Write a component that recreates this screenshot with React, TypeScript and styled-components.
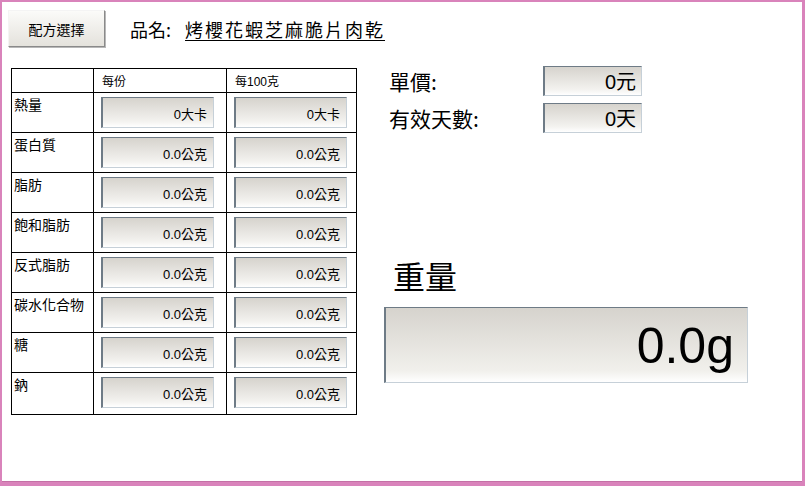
import styled, { createGlobalStyle } from 'styled-components';

type Nutrient = {
  name: string;
  perServing: string;
  per100: string;
};

const nutrients: Nutrient[] = [
  { name: '熱量', perServing: '0大卡', per100: '0大卡' },
  { name: '蛋白質', perServing: '0.0公克', per100: '0.0公克' },
  { name: '脂肪', perServing: '0.0公克', per100: '0.0公克' },
  { name: '飽和脂肪', perServing: '0.0公克', per100: '0.0公克' },
  { name: '反式脂肪', perServing: '0.0公克', per100: '0.0公克' },
  { name: '碳水化合物', perServing: '0.0公克', per100: '0.0公克' },
  { name: '糖', perServing: '0.0公克', per100: '0.0公克' },
  { name: '鈉', perServing: '0.0公克', per100: '0.0公克' },
];

const GlobalStyle = createGlobalStyle`
  html, body {
    margin: 0;
    padding: 0;
    background: #ffffff;
  }
  body {
    font-family: "Liberation Sans", "Noto Sans CJK TC", sans-serif;
    color: #000000;
  }
`;

export default function App() {
  return (
    <>
      <GlobalStyle />
      <Frame>
        <TopBar>
          <RecipeButton>配方選擇</RecipeButton>
          <NameLabel>品名:</NameLabel>
          <ProductName>烤櫻花蝦芝麻脆片肉乾</ProductName>
        </TopBar>

        <Main>
          <NutritionTable>
            <colgroup>
              <col style={{ width: 82 }} />
              <col style={{ width: 133 }} />
              <col style={{ width: 130 }} />
            </colgroup>
            <thead>
              <tr>
                <HeadCell />
                <HeadCell>每份</HeadCell>
                <HeadCell>每100克</HeadCell>
              </tr>
            </thead>
            <tbody>
              {nutrients.map((n) => (
                <BodyRow key={n.name}>
                  <LabelCell>{n.name}</LabelCell>
                  <ValueCell>
                    <ValueBox>{n.perServing}</ValueBox>
                  </ValueCell>
                  <ValueCell>
                    <ValueBox>{n.per100}</ValueBox>
                  </ValueCell>
                </BodyRow>
              ))}
            </tbody>
          </NutritionTable>

          <SidePanel>
            <InfoRow>
              <InfoLabel>單價:</InfoLabel>
              <InfoBox>0元</InfoBox>
            </InfoRow>
            <InfoRow>
              <InfoLabel>有效天數:</InfoLabel>
              <InfoBox>0天</InfoBox>
            </InfoRow>

            <WeightTitle>重量</WeightTitle>
            <WeightBox>0.0g</WeightBox>
          </SidePanel>
        </Main>
      </Frame>
    </>
  );
}

const Frame = styled.div`
  box-sizing: border-box;
  width: 805px;
  height: 486px;
  border-style: solid;
  border-color: #d983bb;
  border-width: 2px 3px 4px 2px;
  box-shadow: inset 0 -1px 0 #c470a6;
  background: #ffffff;
  display: flex;
  flex-direction: column;
  padding: 8px 0 0 6px;
`;

const TopBar = styled.div`
  display: flex;
  align-items: center;
  height: 37px;
`;

const RecipeButton = styled.button`
  box-sizing: border-box;
  width: 97px;
  height: 37px;
  padding: 0;
  border: 1px solid;
  border-color: #f4f4f4 #8a8a8a #8a8a8a #f4f4f4;
  box-shadow: 1px 1px 0 #b8b8b8;
  background: linear-gradient(#fbfbf9, #e4e2dc);
  font-family: "Noto Sans CJK TC", sans-serif;
  font-size: 14px;
  color: #000000;
`;

const NameLabel = styled.span`
  margin-left: 25px;
  font-family: "Noto Sans CJK TC", sans-serif;
  font-size: 18px;
  line-height: 1;
`;

const ProductName = styled.span`
  margin-left: 14px;
  font-family: "Noto Sans CJK TC", sans-serif;
  font-size: 18px;
  letter-spacing: 2px;
  line-height: 1;
  text-decoration: underline;
  text-underline-offset: 3px;
`;

const Main = styled.div`
  display: flex;
  align-items: flex-start;
  margin-top: 19px;
  margin-left: 3px;
`;

const NutritionTable = styled.table`
  border-collapse: collapse;
  table-layout: fixed;
  width: 345px;
  margin-top: 2px;
`;

const HeadCell = styled.th`
  height: 23px;
  padding: 0 0 0 8px;
  border: 1px solid #000000;
  text-align: left;
  vertical-align: middle;
  font-weight: normal;
  font-family: "Liberation Sans", "Noto Sans CJK TC", sans-serif;
  font-size: 12px;
`;

const BodyRow = styled.tr`
  height: 40px;

  &:last-child {
    height: 42px;
  }
`;

const LabelCell = styled.td`
  padding: 3px 0 0 2px;
  border: 1px solid #000000;
  vertical-align: top;
  font-family: "Noto Sans CJK TC", sans-serif;
  font-size: 14px;
  line-height: 16px;
`;

const ValueCell = styled.td`
  padding: 4px 0 0 7px;
  border: 1px solid #000000;
  vertical-align: top;
`;

const ValueBox = styled.div`
  box-sizing: border-box;
  width: 113px;
  height: 31px;
  padding: 9px 6px 0 0;
  border-style: solid;
  border-width: 1px 1px 1px 2px;
  border-color: #6e7b86 #c6d0d8 #c6d0d8 #6e7b86;
  background: linear-gradient(#d6d3cd, #f3f2ef 80%, #ffffff);
  text-align: right;
  font-family: "Liberation Sans", "Noto Sans CJK TC", sans-serif;
  font-size: 13px;
  line-height: 16px;
`;

const SidePanel = styled.div`
  display: flex;
  flex-direction: column;
  margin-left: 27px;
`;

const InfoRow = styled.div`
  display: flex;
  align-items: center;
  margin-bottom: 7px;
`;

const InfoLabel = styled.span`
  width: 154px;
  padding-left: 5px;
  font-family: "Noto Sans CJK TC", sans-serif;
  font-size: 21px;
  line-height: 1;
`;

const InfoBox = styled.div`
  box-sizing: border-box;
  width: 99px;
  height: 30px;
  padding: 4px 5px 0 0;
  border-style: solid;
  border-width: 1px 1px 1px 2px;
  border-color: #6e7b86 #c6d0d8 #c6d0d8 #6e7b86;
  background: linear-gradient(#d6d3cd, #f3f2ef 80%, #ffffff);
  text-align: right;
  font-family: "Liberation Sans", "Noto Sans CJK TC", sans-serif;
  font-size: 20px;
  line-height: 22px;
`;

const WeightTitle = styled.div`
  margin-top: 115px;
  padding-left: 9px;
  font-family: "Noto Sans CJK TC", sans-serif;
  font-size: 32px;
  line-height: 40px;
`;

const WeightBox = styled.div`
  box-sizing: border-box;
  width: 364px;
  height: 76px;
  margin-top: 12px;
  padding: 10px 13px 0 0;
  border-style: solid;
  border-width: 1px 1px 1px 2px;
  border-color: #6e7b86 #c6d0d8 #c6d0d8 #6e7b86;
  background: linear-gradient(#d6d3cd, #f1f0ec 85%, #ffffff);
  text-align: right;
  font-family: "Liberation Sans", sans-serif;
  font-size: 50px;
  line-height: 56px;
`;
